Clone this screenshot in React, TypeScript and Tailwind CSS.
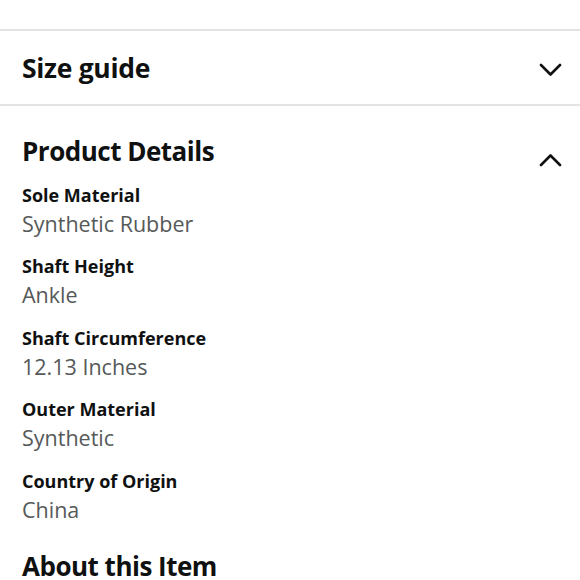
import React from 'react';

const details = [
  { label: 'Sole Material', value: 'Synthetic Rubber' },
  { label: 'Shaft Height', value: 'Ankle' },
  { label: 'Shaft Circumference', value: '12.13 Inches' },
  { label: 'Outer Material', value: 'Synthetic' },
  { label: 'Country of Origin', value: 'China' },
];

function Chevron({ up }: { up?: boolean }) {
  return (
    <svg width="23" height="13" viewBox="0 0 23 13" fill="none" className={up ? 'rotate-180' : ''}>
      <path d="M2 2l9.5 9.5L21 2" stroke="#111" strokeWidth="2.6" strokeLinecap="round" strokeLinejoin="round" />
    </svg>
  );
}

export default function App() {
  return (
    <main className="w-[580px] h-[580px] overflow-hidden bg-white text-[#0f1111] font-['Open_Sans',sans-serif]">
      <div className="h-[31px] border-b-2 border-[#e3e3e3]" />
      <div className="h-[75px] flex items-center justify-between pl-[22px] pr-[18px] border-b-2 border-[#e3e3e3]">
        <h2 className="mt-[3px] text-[26.5px] font-bold tracking-[-0.3px]">Size guide</h2>
        <span className="mt-[4px]">
          <Chevron />
        </span>
      </div>
      <section className="pl-[22px] pr-[18px] pt-[27px]">
        <div className="flex items-center justify-between h-[36px]">
          <h2 className="text-[26px] font-bold tracking-[-0.5px]">Product Details</h2>
          <span className="mt-[18px]">
            <Chevron up />
          </span>
        </div>
        <div className="mt-[12px] flex flex-col">
          {details.map((d) => (
            <div key={d.label} className="h-[71.4px]">
              <div className="text-[18px] font-bold leading-[28px]">{d.label}</div>
              <div className="text-[21.5px] leading-[30px] text-[#565959]">{d.value}</div>
            </div>
          ))}
        </div>
        <h2 className="mt-[9px] text-[26px] font-bold tracking-[-0.5px]">About this Item</h2>
      </section>
    </main>
  );
}
